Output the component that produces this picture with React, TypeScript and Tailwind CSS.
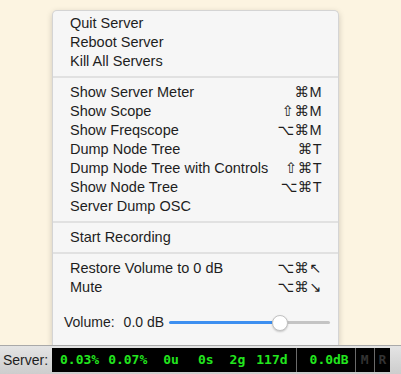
// SuperCollider server menu + status bar

type Item = { label: string; keys?: string };

const groups: Item[][] = [
  [{ label: 'Quit Server' }, { label: 'Reboot Server' }, { label: 'Kill All Servers' }],
  [
    { label: 'Show Server Meter', keys: '⌘M' },
    { label: 'Show Scope', keys: '⇧⌘M' },
    { label: 'Show Freqscope', keys: '⌥⌘M' },
    { label: 'Dump Node Tree', keys: '⌘T' },
    { label: 'Dump Node Tree with Controls', keys: '⇧⌘T' },
    { label: 'Show Node Tree', keys: '⌥⌘T' },
    { label: 'Server Dump OSC' },
  ],
  [{ label: 'Start Recording' }],
  [
    { label: 'Restore Volume to 0 dB', keys: '⌥⌘↖' },
    { label: 'Mute', keys: '⌥⌘↘' },
  ],
];

const MenuRow = ({ item }: { item: Item }) => (
  <div className="flex h-[19px] items-center justify-between pl-[17px] pr-[16px]">
    <span>{item.label}</span>
    {item.keys && <span className="tracking-[0.5px]">{item.keys}</span>}
  </div>
);

const Separator = () => (
  <div className="flex h-[12px] items-center">
    <div className="h-[2px] w-full bg-[#e1e1e1]" />
  </div>
);

const Meter = ({ children, className = '' }: { children: React.ReactNode; className?: string }) => (
  <span className={className}>{children}</span>
);

export default function App() {
  return (
    <div
      className="flex h-[374px] w-[401px] flex-col overflow-hidden bg-[#fcf4e1] text-[14.5px] text-[#1e1e1e]"
      style={{ fontFamily: '"Liberation Sans", "DejaVu Sans", sans-serif' }}
    >
      {/* Menu area */}
      <div className="flex-1 pl-[52px] pt-[10px]">
        <div className="flex h-[335px] w-[287px] flex-col rounded-t-[5px] border border-b-0 border-[#d4d4d4] bg-[#f6f6f6] pt-[3px] shadow-[0_2px_6px_rgba(0,0,0,0.18)]">
          {groups.map((group, gi) => (
            <div key={gi}>
              {gi > 0 && <Separator />}
              {group.map((item) => (
                <MenuRow key={item.label} item={item} />
              ))}
            </div>
          ))}

          {/* Volume slider */}
          <div className="mt-[15px] flex items-center pl-[11px] pr-[8px] text-[14px]">
            <span>Volume:</span>
            <span className="ml-[9px]">0.0 dB</span>
            <div className="relative ml-[5px] flex h-[18px] flex-1 items-center">
              <div className="h-[3px] w-[103px] rounded-l-full bg-[#3d8ff0]" />
              <div className="h-[3px] flex-1 rounded-r-full bg-[#c4c4c4]" />
              <div className="absolute left-[103px] top-[1px] h-[16px] w-[16px] rounded-full border border-[#c2c2c2] bg-white shadow-[0_1px_2px_rgba(0,0,0,0.2)]" />
            </div>
          </div>
        </div>
      </div>

      {/* Server status bar */}
      <div className="flex h-[29px] items-center border-t border-[#a9a9a9] bg-gradient-to-b from-[#e4e4e4] to-[#cdcdcd]">
        <span className="w-[52px] pl-[3px] text-[14px] text-[#1e1e1e]">Server:</span>
        <div
          className="flex h-[24px] w-[338px] items-center bg-black text-[13px] font-bold text-[#22e61e]"
          style={{ fontFamily: '"DejaVu Sans Mono", monospace' }}
        >
          <Meter className="ml-[8px]">0.03%</Meter>
          <Meter className="ml-[9px]">0.07%</Meter>
          <Meter className="ml-[16px]">0u</Meter>
          <Meter className="ml-[19px]">0s</Meter>
          <Meter className="ml-[16px]">2g</Meter>
          <Meter className="ml-[11px]">117d</Meter>
          <div className="ml-[8px] h-full w-[1px] bg-[#6a6a6a]" />
          <Meter className="ml-[13px]">0.0dB</Meter>
          <div className="ml-[6px] h-full w-[1px] bg-[#6a6a6a]" />
          <Meter className="w-[18px] text-center text-[#333333]">M</Meter>
          <div className="h-full w-[1px] bg-[#6a6a6a]" />
          <Meter className="flex-1 text-center text-[#333333]">R</Meter>
        </div>
      </div>
    </div>
  );
}
